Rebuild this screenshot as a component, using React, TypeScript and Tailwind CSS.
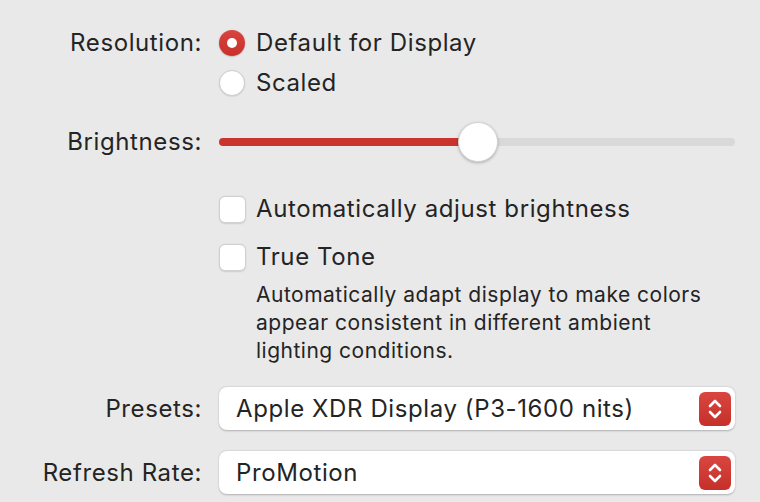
import React from 'react';

const font = { fontFamily: 'Inter, "Liberation Sans", sans-serif' };

function Radio({ checked }: { checked?: boolean }) {
  if (checked) {
    return (
      <span className="flex h-[26px] w-[26px] shrink-0 items-center justify-center rounded-full bg-gradient-to-b from-[#d8443e] to-[#c8302b] shadow-[0_0.5px_1.5px_rgba(0,0,0,0.3)]">
        <span className="h-[10px] w-[10px] rounded-full bg-white" />
      </span>
    );
  }
  return (
    <span className="h-[26px] w-[26px] shrink-0 rounded-full border border-[#cfcfcf] bg-white shadow-[0_0.5px_1.5px_rgba(0,0,0,0.15)]" />
  );
}

function Checkbox() {
  return (
    <span className="h-[27px] w-[27px] shrink-0 rounded-[6px] border border-[#d0d0d0] bg-white shadow-[0_0.5px_1.5px_rgba(0,0,0,0.12)]" />
  );
}

function Popup({ value }: { value: string }) {
  return (
    <div className="flex h-[43px] items-center justify-between rounded-[8px] bg-white pl-[17px] pr-[4px] shadow-[0_0.5px_2px_rgba(0,0,0,0.25)]">
      <span className="text-[24px] tracking-[0.6px] text-[#242424]">{value}</span>
      <span className="flex h-[34px] w-[32px] items-center justify-center rounded-[6px] bg-gradient-to-b from-[#d9463f] to-[#c62f2a]">
        <svg width="16" height="22" viewBox="0 0 16 22" fill="none" stroke="white" strokeWidth="2.6" strokeLinecap="round" strokeLinejoin="round">
          <path d="M3 8 L8 3 L13 8" />
          <path d="M3 14 L8 19 L13 14" />
        </svg>
      </span>
    </div>
  );
}

function Row({ label, className, children }: { label?: string; className?: string; children: React.ReactNode }) {
  return (
    <div className={`flex items-center ${className ?? ''}`}>
      <div className="w-[202px] shrink-0 text-right text-[24px] tracking-[0.6px] text-[#242424]">{label}</div>
      <div className="ml-[17px] flex-1">{children}</div>
    </div>
  );
}

export default function App() {
  return (
    <div className="h-[502px] w-[760px] overflow-hidden bg-[#e9e9e9] pr-[25px] pt-[23px]" style={font}>
      <Row label="Resolution:" className="h-10">
        <label className="flex items-center gap-[11px] text-[24px] tracking-[0.6px] text-[#242424]">
          <Radio checked />
          Default for Display
        </label>
      </Row>
      <Row className="h-10">
        <label className="flex items-center gap-[11px] text-[24px] tracking-[0.6px] text-[#242424]">
          <Radio />
          Scaled
        </label>
      </Row>

      <Row label="Brightness:" className="mt-4 h-[46px]">
        <div className="relative h-[46px]">
          <div className="absolute left-0 right-0 top-[19px] h-[8px] rounded-full bg-[#d9d9d9]" />
          <div className="absolute left-0 top-[19px] h-[8px] w-[259px] rounded-full bg-[#c9342f]" />
          <div className="absolute left-[239px] top-[3px] h-[40px] w-[40px] rounded-full border border-[#d4d4d4] bg-white shadow-[0_1px_3px_rgba(0,0,0,0.25)]" />
        </div>
      </Row>

      <Row className="mt-5 h-12">
        <label className="flex items-center gap-[10px] text-[24px] tracking-[0.6px] text-[#242424]">
          <Checkbox />
          Automatically adjust brightness
        </label>
      </Row>
      <Row className="h-12">
        <label className="flex items-center gap-[10px] text-[24px] tracking-[0.6px] text-[#242424]">
          <Checkbox />
          True Tone
        </label>
      </Row>
      <Row>
        <p className="pl-[37px] pr-[25px] text-[21px] leading-[28px] tracking-[0.5px] text-[#242424]">
          Automatically adapt display to make colors appear consistent in different ambient lighting conditions.
        </p>
      </Row>

      <Row label="Presets:" className="mt-[22px]">
        <Popup value="Apple XDR Display (P3-1600 nits)" />
      </Row>
      <Row label="Refresh Rate:" className="mt-[21px]">
        <Popup value="ProMotion" />
      </Row>
    </div>
  );
}
